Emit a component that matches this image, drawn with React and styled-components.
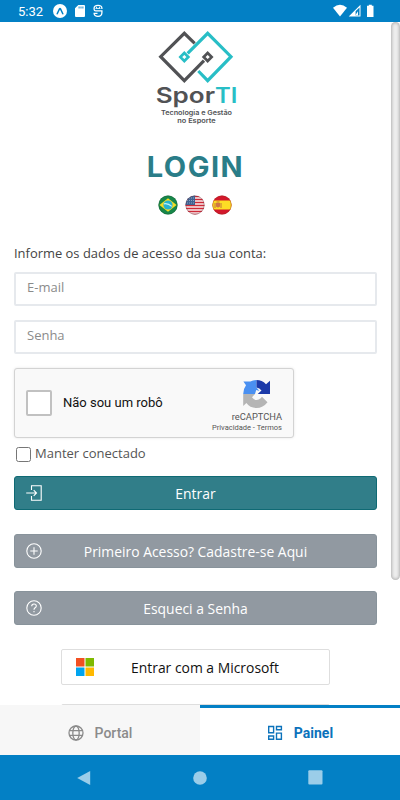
import React from "react";
import styled, { createGlobalStyle } from "styled-components";

const App = () => {
  return (
    <Screen>
      <GlobalStyle />
      <StatusBar>
        <Clock>5:32</Clock>
        <ExpoIcon />
        <SdCardIcon />
        <DebugIcon />
        <Spacer />
        <SignalIcons />
      </StatusBar>

      <Page>
        <Content>
          <Logo />
          <Title>LOGIN</Title>
          <Flags>
            <BrazilFlag />
            <UsaFlag />
            <SpainFlag />
          </Flags>

          <Hint>Informe os dados de acesso da sua conta:</Hint>
          <Input type="email" placeholder="E-mail" />
          <Input type="password" placeholder="Senha" />

          <Captcha>
            <CaptchaBox />
            <CaptchaLabel>Não sou um robô</CaptchaLabel>
            <CaptchaBrand>
              <CaptchaIcon />
              <CaptchaName>reCAPTCHA</CaptchaName>
              <CaptchaLinks>Privacidade - Termos</CaptchaLinks>
            </CaptchaBrand>
          </Captcha>

          <Remember>
            <RememberBox />
            <span>Manter conectado</span>
          </Remember>

          <Button $primary>
            <EnterIcon />
            <span>Entrar</span>
          </Button>
          <Button $gap="24px">
            <PlusIcon />
            <span>Primeiro Acesso? Cadastre-se Aqui</span>
          </Button>
          <Button $gap="23px">
            <HelpIcon />
            <span>Esqueci a Senha</span>
          </Button>

          <SocialButton>
            <MicrosoftIcon />
            <span>Entrar com a Microsoft</span>
          </SocialButton>
          <SocialButton />
        </Content>
        <Scrollbar />
      </Page>

      <Tabs>
        <Tab>
          <GlobeIcon />
          <span>Portal</span>
        </Tab>
        <Tab $active>
          <PanelIcon />
          <span>Painel</span>
        </Tab>
      </Tabs>

      <NavBar>
        <svg width="14" height="16" viewBox="0 0 14 16">
          <path d="M13.2 1v14L.2 8z" />
        </svg>
        <svg width="14" height="14" viewBox="0 0 14 14">
          <circle cx="7" cy="7" r="6.8" />
        </svg>
        <svg width="15" height="15" viewBox="0 0 15 15">
          <rect x=".3" y=".3" width="14.2" height="14.2" rx="1" />
        </svg>
      </NavBar>
    </Screen>
  );
};

export default App;

const ExpoIcon = () => (
  <svg width="14" height="14" viewBox="0 0 14 14">
    <circle cx="7" cy="7" r="7" fill="#fff" />
    <path
      d="M4.2 9.8 6.5 4.9q.5-.8 1 0l2.3 4.900"
      fill="none"
      stroke="#0380c5"
      strokeWidth="1.5"
      strokeLinecap="round"
    />
  </svg>
);

const SdCardIcon = () => (
  <svg width="10" height="12" viewBox="0 0 10 12">
    <path d="M3.3 0H9q1 0 1 1v10q0 1-1 1H1q-1 0-1-1V3.3z" fill="#fff" />
    <path d="M4.1 1.5v2M6 1.5v2M7.9 1.5v2" stroke="#0380c5" strokeWidth=".9" />
  </svg>
);

const DebugIcon = () => (
  <svg width="10" height="14" viewBox="0 0 10 14" fill="none" stroke="#fff">
    <path
      d="M8.9 5V4.200Q8.900 1.300 5 1.300T1.100 4.200v1q0 1.600 1.600 1.600h6.200v2q0 3.500-3.900 3.500T1.100 9.300h3.400"
      strokeWidth="1.3"
    />
    <path d="M2.5 4.4h5M3.5 2.8v1.5M6.5 2.8v1.5" strokeWidth=".9" />
  </svg>
);

const SignalIcons = () => (
  <svg width="42" height="14" viewBox="0 0 42 14" fill="#fff">
    <path d="M0 3.7Q7-2.2 14 3.7L7 12.4z" />
    <path d="M27.5.8v11.8H15.7zM26.5 11.6V3.4l-3.9 3.9v4.3z" fillRule="evenodd" />
    <path d="M22.2 11.6 25 7.2v4.4z" />
    <path d="M34 1.8h1.8V.8h3v1h1.7v11.1H34z" />
  </svg>
);

const Logo = () => (
  <LogoSvg width="120" height="110" viewBox="0 0 360 330">
    <g fill="none" strokeWidth="9.5">
      <path d="M164 64 133 34 62 104l71 72 59-60" stroke="#515255" />
      <path d="m203 93 12 12-12 12-12-12z" stroke="#515255" strokeWidth="8" />
      <path d="m175 147 28 29 70-72-70-70-60 60" stroke="#28bec6" />
      <path d="m133 93 12 12-12 12-12-12z" stroke="#28bec6" strokeWidth="8" />
    </g>
    <g fontSize="64" fontWeight="600">
      <text x="47" y="244" fill="#515255" textLength="178" lengthAdjust="spacingAndGlyphs">
        Spor
      </text>
      <text x="225" y="244" fill="#28bec6" textLength="67" lengthAdjust="spacingAndGlyphs">
        TI
      </text>
    </g>
    <g fontSize="19" fontWeight="600" fill="#515255">
      <text x="63" y="278" textLength="213" lengthAdjust="spacingAndGlyphs">
        Tecnologia e Gestão
      </text>
      <text x="112" y="302" textLength="115" lengthAdjust="spacingAndGlyphs">
        no Esporte
      </text>
    </g>
  </LogoSvg>
);

const BrazilFlag = () => (
  <svg width="20" height="20" viewBox="0 0 20 20">
    <circle cx="10" cy="10" r="9.6" fill="#17874a" />
    <path d="M10 3.2 18.6 10 10 16.8 1.4 10z" fill="#f5dc24" />
    <circle cx="10" cy="10" r="4.6" fill="#27b2d2" />
    <path d="M6 8.8q4-.8 7.8 2.6" stroke="#c9f2f2" strokeWidth="1.2" fill="none" />
    <circle cx="10" cy="10" r="9.2" fill="none" stroke="#174f2c" strokeOpacity=".35" />
  </svg>
);

const UsaFlag = () => (
  <svg width="20" height="20" viewBox="0 0 20 20">
    <clipPath id="usa">
      <circle cx="10" cy="10" r="9.6" />
    </clipPath>
    <g clipPath="url(#usa)">
      <path d="M0 0h20v20H0z" fill="#f8eeee" />
      <path
        d="M0 1.4h20M0 4.4h20M0 7.4h20M0 10.4h20M0 13.4h20M0 16.4h20M0 19.4h20"
        stroke="#ce2a38"
        strokeWidth="1.5"
      />
      <path d="M0 0h10v10H0z" fill="#3f6292" />
      <path d="M2 3h8M2 5.5h8M2 8h8" stroke="#a9bed6" strokeWidth=".8" strokeDasharray=".9 1.1" />
    </g>
    <circle cx="10" cy="10" r="9.2" fill="none" stroke="#5c3846" strokeOpacity=".35" />
  </svg>
);

const SpainFlag = () => (
  <svg width="20" height="20" viewBox="0 0 20 20">
    <clipPath id="spain">
      <circle cx="10" cy="10" r="9.6" />
    </clipPath>
    <g clipPath="url(#spain)">
      <path d="M0 0h20v20H0z" fill="#d3172b" />
      <path d="M0 5.5h20v9H0z" fill="#fddc25" />
      <path d="M4 8h4v3.5q-2 2-4 0z" fill="#cf7547" />
      <path d="M3 8v5M9 8v5M4.5 7h3" stroke="#bd6a3b" strokeWidth=".9" />
    </g>
    <circle cx="10" cy="10" r="9.2" fill="none" stroke="#8c3020" strokeOpacity=".35" />
  </svg>
);

const CaptchaIcon = () => (
  <svg width="29" height="28" viewBox="0 0 29 28">
    <path d="M14.5 0v7.5l3 3.5-3.3-1-1.200 4H1.2Q1.2 9 4 5.300L1.400 1.600h7Q11 0 14.500 0z" fill="#4a90f1" />
    <path d="M14.5 0Q20 0 24 4.2l4-3.4v13.3H15.7l3.8-3.5Q17.7 7.8 14.5 7.5z" fill="#1c3aa9" />
    <path d="M1.2 14H13l-3 3.3q4 5 8.7 1l1.300-1.600 5.500 5.500Q21 28 14.500 28 8 28 4.400 23L1.200 26z" fill="#b5b5b5" />
  </svg>
);

const EnterIcon = () => (
  <svg width="16" height="16" viewBox="0 0 16 16">
    <path d="M5.5 5V.8h9.7v14.4H5.5V11M.2 8h10.3M7.7 5.2 10.5 8l-2.8 2.8" />
  </svg>
);

const PlusIcon = () => (
  <svg width="16" height="16" viewBox="0 0 16 16">
    <circle cx="8" cy="8" r="7.2" />
    <path d="M8 4.3v7.4M4.3 8h7.4" />
  </svg>
);

const HelpIcon = () => (
  <svg width="16" height="16" viewBox="0 0 16 16">
    <circle cx="8" cy="8" r="7.2" />
    <path d="M5.7 6.2q0-2.2 2.3-2.2t2.3 2q0 1-1.2 1.8Q8 8.6 8 9.7M8 11v1.3" />
  </svg>
);

const MicrosoftIcon = () => (
  <svg width="18" height="18" viewBox="0 0 18 18">
    <path d="M0 0h8.5v8.5H0z" fill="#f25022" />
    <path d="M9.5 0H18v8.5H9.5z" fill="#7fba00" />
    <path d="M0 9.5h8.5V18H0z" fill="#00a4ef" />
    <path d="M9.5 9.5H18V18H9.5z" fill="#ffb900" />
  </svg>
);

const GlobeIcon = () => (
  <svg width="16" height="16" viewBox="0 0 16 16" fill="none" stroke="currentColor" strokeWidth="1.3">
    <circle cx="8" cy="8" r="7" />
    <ellipse cx="8" cy="8" rx="3.2" ry="7" />
    <path d="M1.4 5.6h13.2M1.4 10.4h13.2" />
  </svg>
);

const PanelIcon = () => (
  <svg width="16" height="16" viewBox="0 0 16 16" fill="none" stroke="currentColor" strokeWidth="1.4">
    <path d="M1.7 1.5h4.9v6.2H1.7zM9.5 1.5h4.9v3.3H9.5zM1.7 11h4.9v3.3H1.7zM9.5 8.1h4.9v6.2H9.5z" />
  </svg>
);

const GlobalStyle = createGlobalStyle`
  * {
    box-sizing: border-box;
  }

  body {
    margin: 0;
    background: #fff;
  }
`;

const Screen = styled.div`
  width: 400px;
  height: 800px;
  display: flex;
  flex-direction: column;
  overflow: hidden;
  font-family: "Open Sans", "Noto Sans", sans-serif;
`;

const StatusBar = styled.header`
  flex: none;
  height: 22px;
  display: flex;
  align-items: center;
  padding: 0 25px 0 18px;
  background: #0380c5;

  svg {
    flex: none;
    margin-right: 8px;
  }

  svg:last-child {
    margin-right: 0;
  }
`;

const Clock = styled.span`
  width: 35px;
  font: 13px Roboto, sans-serif;
  color: #fff;
`;

const Spacer = styled.div`
  flex: 1;
`;

const Page = styled.main`
  height: 683px;
  display: flex;
  justify-content: space-between;
  overflow: hidden;
`;

const Content = styled.div`
  width: 391px;
  padding: 0 14px;
  display: flex;
  flex-direction: column;

  & > * {
    flex: none;
  }
`;

const Scrollbar = styled.div`
  width: 9px;
  height: 558px;
  border-radius: 5px;
  background: #ededed;
  box-shadow: inset 0 0 3px 1px rgba(0, 0, 0, 0.25);
`;

const LogoSvg = styled.svg`
  margin-left: 126px;
  font-family: Inter, sans-serif;
`;

const Title = styled.h1`
  margin: 18px 0 0;
  height: 34px;
  line-height: 34px;
  text-align: center;
  font-family: Inter, sans-serif;
  font-size: 29px;
  font-weight: 700;
  letter-spacing: 1.5px;
  color: #2a7d88;
`;

const Flags = styled.div`
  display: flex;
  justify-content: center;
  gap: 7px;
  margin: 11px 2px 0 0;
`;

const Hint = styled.p`
  margin: 28px 0 0;
  height: 20px;
  line-height: 20px;
  font-size: 12.95px;
  color: #444;
`;

const Input = styled.input`
  height: 34px;
  margin: 9px 0 5px;
  padding: 0 11px 5px;
  border: 2px solid #e6e9ed;
  border-radius: 2px;
  outline: none;
  font-family: inherit;
  font-size: 13px;

  & + & {
    margin: 9px 0 0;
  }

  &::placeholder {
    color: #8b8b8b;
  }
`;

const Captcha = styled.div`
  width: 280px;
  height: 70px;
  margin-top: 14px;
  padding: 0 11px;
  display: flex;
  align-items: center;
  border: 1px solid #d3d3d3;
  border-radius: 3px;
  background: #f9f9f9;
  box-shadow: 0 0 3px rgba(0, 0, 0, 0.1);
  font-family: Roboto, sans-serif;
`;

const CaptchaBox = styled.div`
  width: 26px;
  height: 26px;
  margin-bottom: 1px;
  border: 2px solid #c1c1c1;
  border-radius: 2px;
  background: #fff;
`;

const CaptchaLabel = styled.span`
  flex: 1;
  margin-left: 11px;
  padding-bottom: 2px;
  font-size: 13px;
  color: #111;
`;

const CaptchaBrand = styled.div`
  display: flex;
  flex-direction: column;
  align-items: flex-end;
  padding-top: 6px;
  color: #555;

  svg {
    margin-right: 11px;
  }
`;

const CaptchaName = styled.span`
  margin: 3px 0 0;
  font-size: 9.3px;
  line-height: 12px;
`;

const CaptchaLinks = styled.span`
  font-size: 7.5px;
  line-height: 10px;
`;

const Remember = styled.label`
  height: 20px;
  margin-top: 6px;
  padding-left: 2px;
  display: flex;
  gap: 4px;
  font-size: 13px;
  line-height: 18px;
  color: #555;
`;

const RememberBox = styled.div`
  width: 15px;
  height: 15px;
  margin-top: 3px;
  border: 1px solid #767676;
  border-radius: 2.5px;
`;

const Button = styled.button`
  height: 34px;
  margin: ${({ $gap }) => $gap || "12px"} 0 0;
  padding: 0 11px;
  display: flex;
  align-items: center;
  border: 1px solid ${({ $primary }) => ($primary ? "#0f6a74" : "#88939b")};
  border-radius: 3px;
  background: ${({ $primary }) => ($primary ? "#317e89" : "#9199a1")};
  color: #fff;
  font-family: inherit;
  font-size: 13.9px;

  svg {
    margin-right: -16px;
    fill: none;
    stroke: #fff;
    stroke-width: 1.1;
  }

  span {
    flex: 1;
  }
`;

const SocialButton = styled.button`
  width: 269px;
  height: 36px;
  margin: 24px 0 0 47px;
  padding: 0 15px 0 14px;
  display: flex;
  align-items: center;
  border: 1px solid #dedede;
  border-radius: 2px;
  background: #fff;
  color: #111;
  font-family: inherit;
  font-size: 13.9px;

  & + & {
    margin-top: 19px;
  }

  span {
    flex: 1;
    padding-left: 2px;
  }
`;

const Tabs = styled.nav`
  flex: none;
  height: 50px;
  display: flex;
`;

const Tab = styled.a`
  flex: 1;
  display: flex;
  align-items: center;
  justify-content: center;
  gap: 11px;
  padding-top: ${({ $active }) => ($active ? "2px" : "5px")};
  border-top: ${({ $active }) => ($active ? "3px solid #0380c5" : "none")};
  background: ${({ $active }) => ($active ? "#fff" : "#f7f7f7")};
  color: ${({ $active }) => ($active ? "#0b72bb" : "#8b8b8b")};
  font-family: Roboto, sans-serif;
  font-size: 14px;
  font-weight: ${({ $active }) => ($active ? 700 : 500)};
`;

const NavBar = styled.footer`
  flex: none;
  height: 45px;
  display: flex;
  align-items: center;
  justify-content: space-between;
  padding: 0 77px;
  background: #0380c5;
  fill: #9bcde9;
`;
